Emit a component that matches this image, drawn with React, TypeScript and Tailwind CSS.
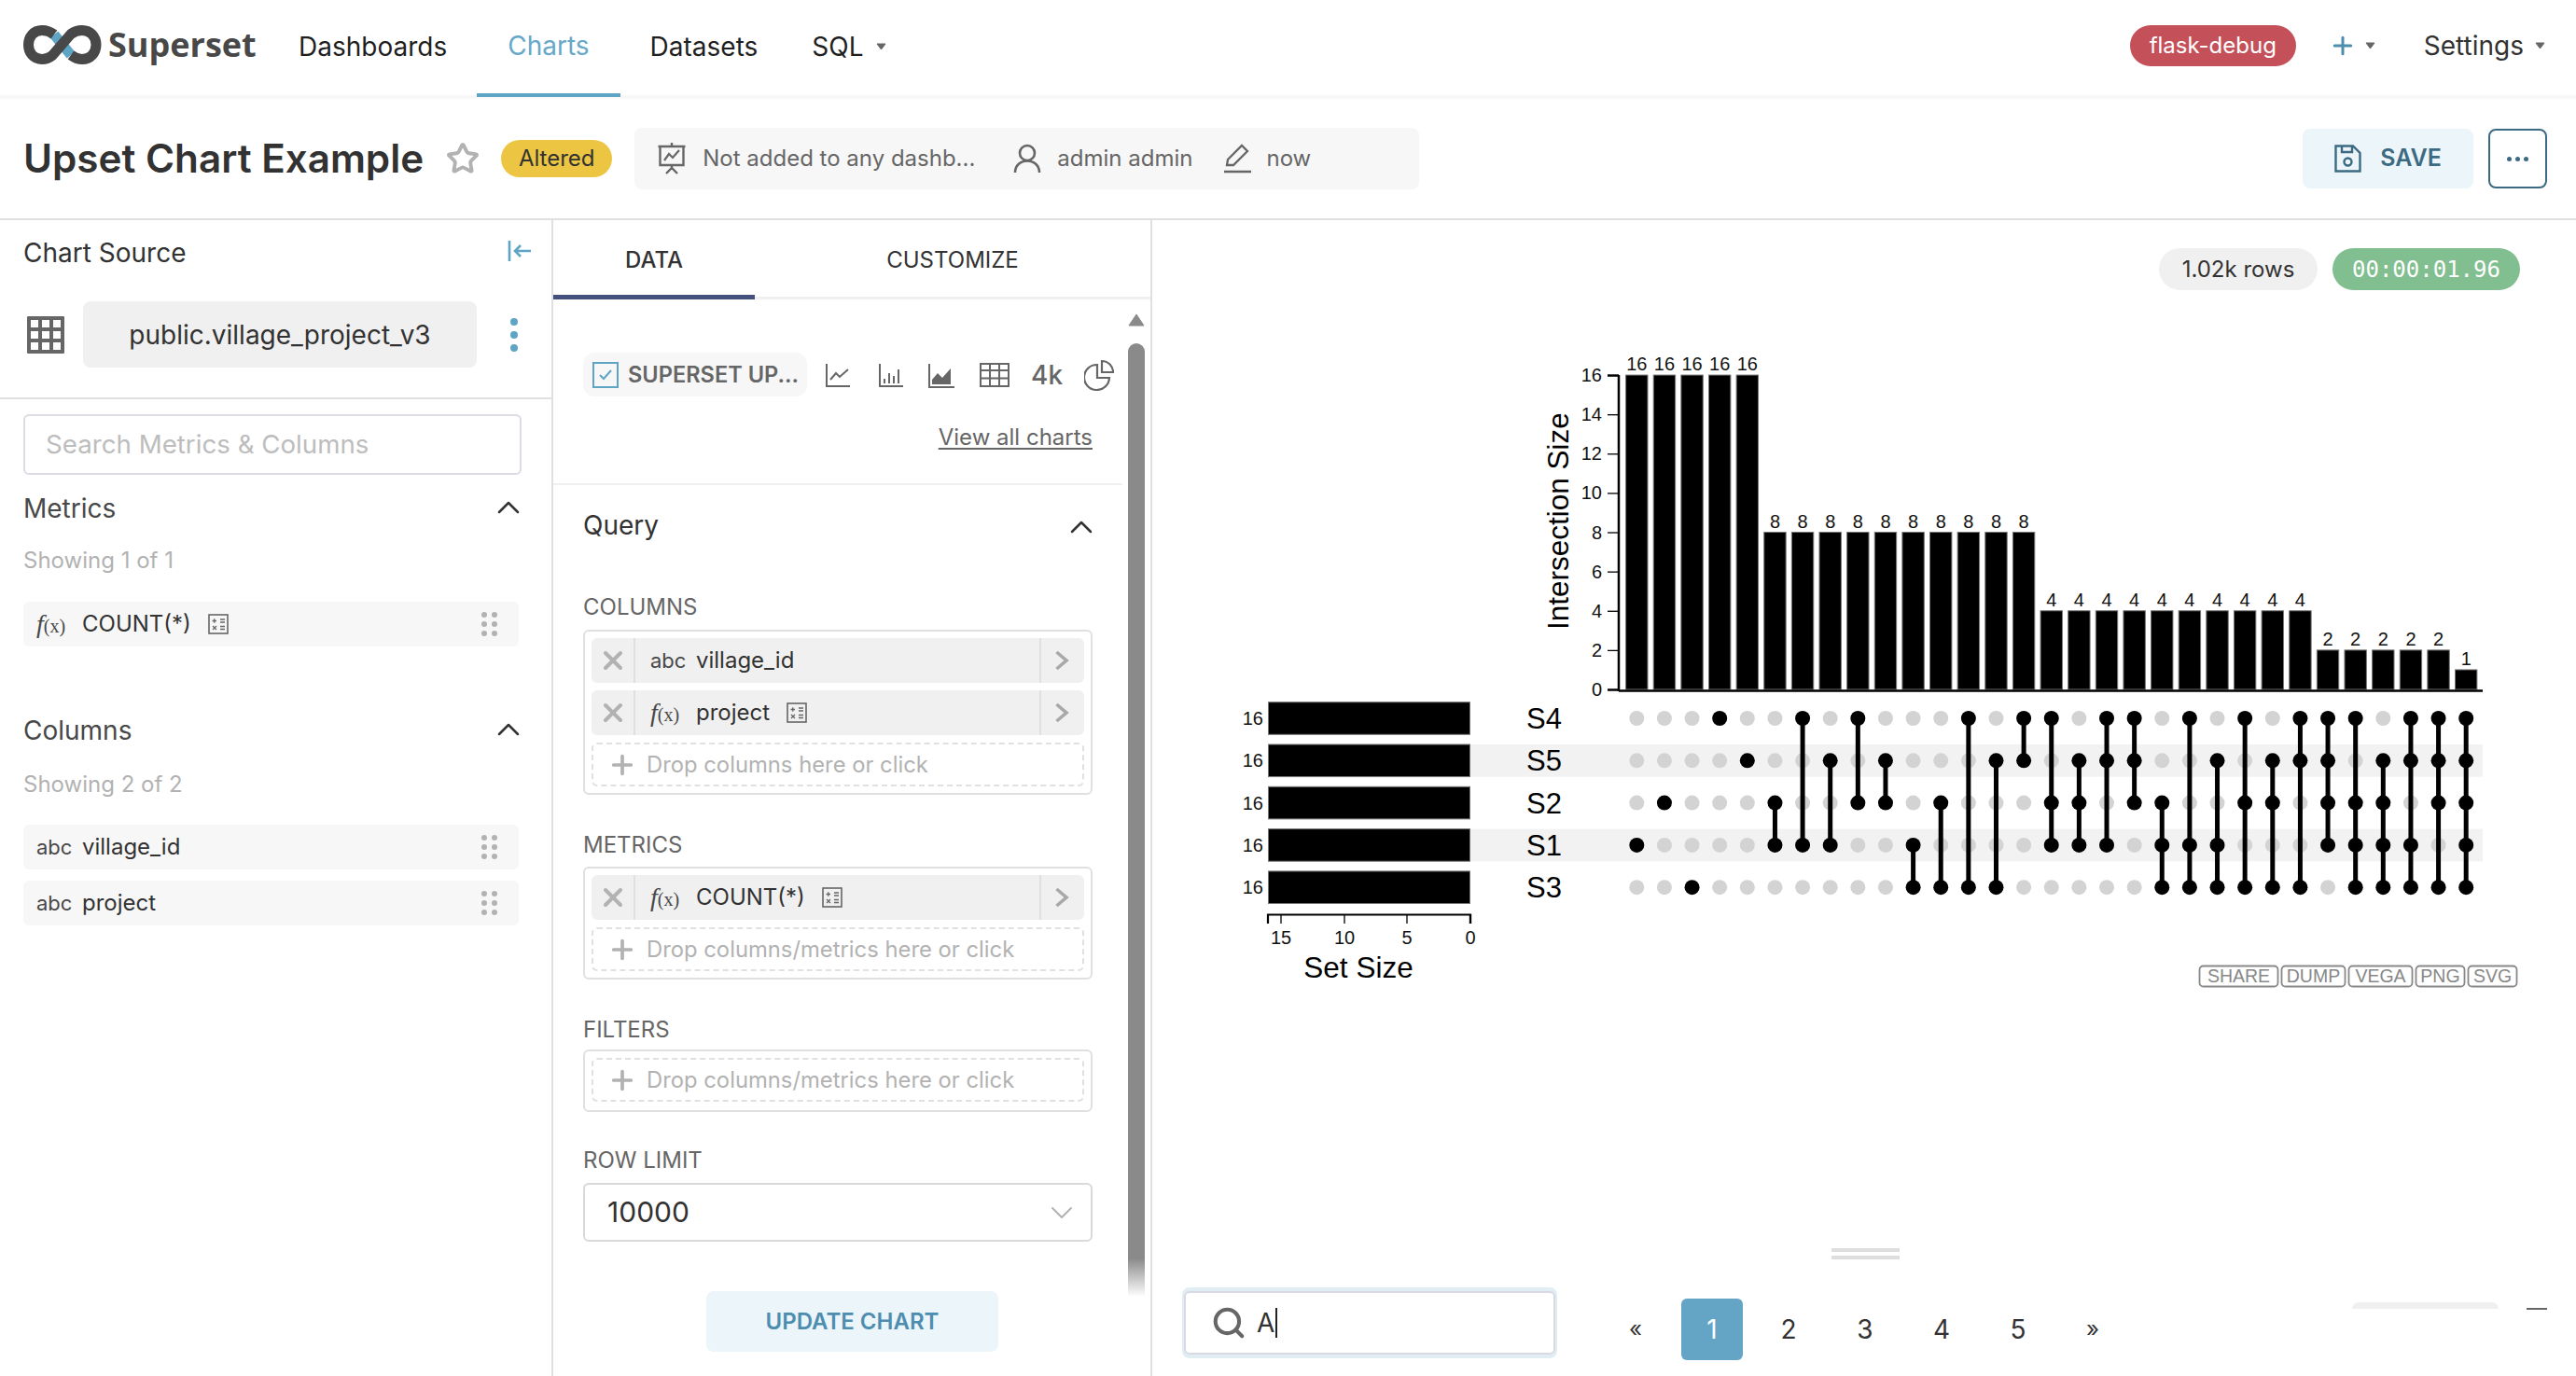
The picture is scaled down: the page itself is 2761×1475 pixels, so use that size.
import React from 'react';
import { ChevronUp, ChevronDown, X, Plus, Star, Search } from 'lucide-react';

const sans = "font-['Inter',sans-serif]";

// rows top to bottom: S4, S5, S2, S1, S3
const sets = ['S4', 'S5', 'S2', 'S1', 'S3'];
const combos = [
  [3], [2], [4], [0], [1],
  [2, 3], [0, 3], [1, 3], [0, 2], [1, 2], [3, 4], [2, 4], [0, 4], [1, 4], [0, 1],
  [0, 2, 3], [1, 2, 3], [0, 1, 3], [0, 1, 2], [2, 3, 4], [0, 3, 4], [1, 3, 4], [0, 2, 4], [1, 2, 4], [0, 1, 4],
  [0, 1, 2, 3], [0, 2, 3, 4], [1, 2, 3, 4], [0, 1, 3, 4], [0, 1, 2, 4], [0, 1, 2, 3, 4],
];
const sizes = [16, 16, 16, 16, 16, 8, 8, 8, 8, 8, 8, 8, 8, 8, 8, 4, 4, 4, 4, 4, 4, 4, 4, 4, 4, 2, 2, 2, 2, 2, 1];

const colX = (i: number) => 1754.3 + i * 29.63;
const rowY = (i: number) => 770 + i * 45.3;

function Caret({ className }: { className?: string }) {
  return (
    <svg width="11" height="8" viewBox="0 0 11 8" className={className}>
      <path d="M1 1 H10 L5.5 7 Z" fill="#666" stroke="#666" strokeLinejoin="round" />
    </svg>
  );
}

function Logo() {
  return (
    <svg width="84" height="42" viewBox="0 0 84 42" fill="none" strokeWidth="11">
      <path d="M33 10 L51 32" stroke="#5ea4c5" />
      <path d="M33 10 C29 7 25 5.5 20 5.5 C11 5.5 5.5 12.5 5.5 21 C5.5 29.5 11 36.5 20 36.5 C25 36.5 28 35 31 32.5 L51 9.5 C55 6.5 58 5.5 63 5.5 C72 5.5 78 12.5 78 21 C78 29.5 72 36.5 63 36.5 C58 36.5 55 35 51 32" stroke="#484848" />
    </svg>
  );
}

function FxIcon() {
  return (
    <span className="inline-flex items-baseline w-[37px] text-[#484848] font-['Liberation_Serif',serif]">
      <span className="italic text-[28px] leading-none">f</span>
      <span className="text-[20px] leading-none">(x)</span>
    </span>
  );
}

function CalcIcon() {
  return (
    <svg width="22" height="22" viewBox="0 0 22 22" fill="none" stroke="#666" strokeWidth="1.6">
      <rect x="1" y="1" width="20" height="20" />
      <path d="M4.5 7.5 H9 M6.75 5.2 V9.8 M13 6 H18 M13 9 H18 M5 13 L9 17 M9 13 L5 17 M13 13.5 H18 M13 16.5 H18" strokeWidth="1.3" />
    </svg>
  );
}

function Grip() {
  return (
    <div className="grid grid-cols-2 gap-x-[5px] gap-y-[4px]">
      {[0, 1, 2, 3, 4, 5].map((i) => (
        <span key={i} className="w-[6px] h-[6px] rounded-full bg-[#b2b2b2]" />
      ))}
    </div>
  );
}

function ListRow({ icon, label, calc }: { icon: React.ReactNode; label: string; calc?: boolean }) {
  return (
    <div className="h-[48px] w-[531px] ml-[25px] bg-[#f7f7f7] rounded-[6px] flex items-center pl-[14px] pr-[23px] text-[24px] text-[#323232]">
      {icon}
      <span className="ml-[12px]">{label}</span>
      {calc && <span className="ml-[18px] flex"><CalcIcon /></span>}
      <span className="ml-auto"><Grip /></span>
    </div>
  );
}

function Abc() {
  return <span className="w-[37px] text-[22px] text-[#484848]">abc</span>;
}

function Chip({ icon, label, calc }: { icon: React.ReactNode; label: string; calc?: boolean }) {
  return (
    <div className="h-[48px] bg-[#f0f0f0] rounded-[6px] flex items-center text-[#323232]">
      <div className="w-[47px] h-full flex items-center justify-center border-r-2 border-[#e0e0e0]">
        <X size={32} strokeWidth={3} className="text-[#b2b2b2]" />
      </div>
      <div className="flex-1 flex items-center pl-[16px] text-[24px]">
        {icon}
        <span className="ml-[12px]">{label}</span>
        {calc && <span className="ml-[18px] flex"><CalcIcon /></span>}
      </div>
      <div className="w-[48px] h-full flex items-center justify-center border-l-2 border-[#e0e0e0]">
        <svg width="16" height="24" viewBox="0 0 16 24" fill="none" stroke="#a8a8a8" strokeWidth="3.6" className="-ml-[3px]">
          <path d="M2.5 3 L13 12 L2.5 21" />
        </svg>
      </div>
    </div>
  );
}

function DropZone({ text }: { text: string }) {
  return (
    <div className="h-[47px] border-2 border-dashed border-[#e0e0e0] rounded-[6px] flex items-center pl-[15px] text-[23.8px] text-[#b2b2b2]">
      <Plus size={32} strokeWidth={2.8} className="mr-[10px] text-[#b2b2b2]" />
      {text}
    </div>
  );
}

function ControlBox({ children, className }: { children: React.ReactNode; className: string }) {
  return (
    <div className={`${className} w-[546px] border-2 border-[#e0e0e0] rounded-[6px] p-[7px] flex flex-col gap-[8px]`}>
      {children}
    </div>
  );
}

function UpsetChart() {
  return (
    <svg width="1400" height="720" viewBox="1300 370 1400 720" className="block font-['Liberation_Sans',sans-serif]">
      {/* intersection bars */}
      {sizes.map((s, i) => (
        <g key={i}>
          <rect x={colX(i) - 11.7} y={739 - s * 21.06} width={23.4} height={s * 21.06} fill="#000" stroke="#777" strokeWidth="1" />
          <text x={colX(i)} y={739 - s * 21.06 - 5} textAnchor="middle" fontSize="20" fill="#111">{s}</text>
        </g>
      ))}
      <path d="M1735 402 V741 M1735 740.5 H2661" stroke="#000" strokeWidth="2.5" fill="none" />
      {[0, 2, 4, 6, 8, 10, 12, 14, 16].map((t) => (
        <g key={t}>
          <line x1="1723" x2="1735" y1={739.5 - t * 21.06} y2={739.5 - t * 21.06} stroke="#000" strokeWidth={t === 0 || t === 16 ? 2.5 : 1.3} />
          <text x="1717" y={746 - t * 21.06} textAnchor="end" fontSize="20" fill="#111">{t}</text>
        </g>
      ))}
      <text transform="translate(1681 675) rotate(-90)" fontSize="31.5" fill="#000">Intersection Size</text>

      {/* stripes */}
      {[1, 3].map((r) => (
        <rect key={r} x="1576" y={rowY(r) - 17.3} width="1085" height="34.7" fill="#f2f2f2" />
      ))}

      {/* set bars */}
      {sets.map((s, r) => (
        <g key={s}>
          <rect x="1359.5" y={rowY(r) - 17.3} width="216" height="34.6" fill="#000" stroke="#777" strokeWidth="1" />
          <text x="1354" y={rowY(r) + 7} textAnchor="end" fontSize="20" fill="#111">16</text>
          <text x="1636" y={rowY(r) + 11} fontSize="31" fill="#000">{s}</text>
        </g>
      ))}
      <path d="M1359 990 V980.5 H1576 V990" stroke="#000" strokeWidth="2.2" fill="none" />
      {[[15, 1373], [10, 1441], [5, 1508], [0, 1576]].map(([t, x]) => (
        <g key={t}>
          <line x1={x} x2={x} y1="980" y2="990" stroke="#000" strokeWidth={t === 0 ? 2.2 : 1.3} />
          <text x={x} y="1012" textAnchor="middle" fontSize="20" fill="#111">{t}</text>
        </g>
      ))}
      <text x="1456" y="1048" textAnchor="middle" fontSize="31.5" fill="#000">Set Size</text>

      {/* matrix */}
      {combos.map((c, i) => (
        <g key={i}>
          {sets.map((_, r) => (
            <circle key={r} cx={colX(i)} cy={rowY(r)} r="8" fill={c.includes(r) ? '#000' : '#d3d3d3'} />
          ))}
          <line x1={colX(i)} x2={colX(i)} y1={rowY(c[0])} y2={rowY(c[c.length - 1])} stroke="#000" strokeWidth="5" />
        </g>
      ))}

      {/* export buttons */}
      {[['SHARE', 2357, 84], ['DUMP', 2445, 68], ['VEGA', 2517, 68], ['PNG', 2589, 52], ['SVG', 2645, 52]].map(([t, x, w]) => (
        <g key={t as string}>
          <rect x={(x as number) + 0.5} y="1035.5" width={w as number} height="22" rx="4" fill="#fff" stroke="#888" strokeWidth="1.8" />
          <text x={(x as number) + 0.5 + (w as number) / 2} y="1053" textAnchor="middle" fontSize="19.5" fill="#888">{t as string}</text>
        </g>
      ))}
    </svg>
  );
}

export default function App() {
  return (
    <div className={`${sans} w-[2761px] h-[1475px] overflow-hidden bg-white flex flex-col text-[#323232]`}>
      {/* top nav */}
      <nav className="h-[106px] shrink-0 border-b-4 border-[#f7f7f7] flex items-stretch pl-[25px] pr-[33px] text-[28px]">
        <div className="flex items-center mb-[6px]">
          <Logo />
          <span className="w-[160px] ml-[7px] text-[36px] font-bold text-[#484848] font-['Open_Sans',sans-serif]">Superset</span>
        </div>
        <span className="ml-[44px] pb-[2px] flex items-center text-[#1f1f1f]">Dashboards</span>
        <span className="ml-[32px] px-[33px] -mb-[2px] pb-[2px] flex items-center text-[#66a8c9] border-b-4 border-[#5ea4c5]">Charts</span>
        <span className="ml-[32px] pb-[2px] flex items-center text-[#1f1f1f]">Datasets</span>
        <span className="ml-[58px] pb-[2px] flex items-center text-[#1f1f1f]">SQL<Caret className="ml-[13px]" /></span>
        <div className="ml-auto pb-[4px] flex items-center">
          <span className="h-[44px] w-[178px] rounded-[22px] bg-[#c4505a] text-white text-[24px] flex items-center justify-center">flask-debug</span>
          <Plus size={30} strokeWidth={2.4} className="ml-[35px] text-[#4d8db0]" />
          <Caret className="ml-[9px]" />
          <span className="ml-[52px]">Settings</span>
          <Caret className="ml-[12px]" />
        </div>
      </nav>

      {/* title bar */}
      <header className="h-[130px] shrink-0 border-b-2 border-[#e0e0e0] flex items-center pl-[25px] pr-[31px]">
        <h1 className="text-[42.2px] font-semibold text-[#323232]">Upset Chart Example</h1>
        <Star size={36} strokeWidth={2.6} className="ml-[24px] text-[#b2b2b2]" />
        <span className="ml-[23px] h-[40px] w-[119px] rounded-[20px] bg-[#ecc643] text-[24px] text-[#323232] flex items-center justify-center">Altered</span>
        <div className="ml-[24px] h-[66px] w-[841px] bg-[#f7f7f7] rounded-[8px] flex items-center pl-[24px] text-[24px] text-[#666]">
          <svg width="32" height="36" viewBox="0 0 32 36" fill="none" stroke="#666" strokeWidth="2.4">
            <path d="M1.5 5 H30.5 M3.5 5 V25 H28.5 V5 M16 1 V5 M16 25 V28 M10 34 L16 28 L22 34" />
            <path d="M8 20 L13 13 L17 17 L24 9" strokeWidth="2.2" />
          </svg>
          <span className="ml-[17px]">Not added to any dashb...</span>
          <svg width="30" height="32" viewBox="0 0 30 32" fill="none" stroke="#666" strokeWidth="2.6" className="ml-[41px]">
            <circle cx="15" cy="10" r="8" />
            <path d="M2 31 C2 23 8 18.5 15 18.5 C22 18.5 28 23 28 31" />
          </svg>
          <span className="ml-[17px]">admin admin</span>
          <svg width="32" height="34" viewBox="0 0 32 34" fill="none" stroke="#666" strokeWidth="2.3" className="ml-[33px]">
            <path d="M4 24 L5 18 L20 3 L26 9 L11 24 Z M1 31 H30" />
          </svg>
          <span className="ml-[14px]">now</span>
        </div>
        <button className="ml-auto h-[64px] w-[183px] bg-[#ecf5f9] rounded-[8px] flex items-center justify-center text-[25px] font-semibold text-[#3c6a83]">
          <svg width="29" height="30" viewBox="0 0 29 30" fill="none" stroke="#3c6a83" strokeWidth="2.4" className="mr-[20px]">
            <path d="M1.5 1.5 H20 L27.5 9 V28.5 H1.5 Z M8 1.5 V8 H19 V1.5" />
            <circle cx="14.5" cy="18.5" r="4" />
          </svg>
          SAVE
        </button>
        <button className="ml-[16px] h-[64px] w-[63px] border-2 border-[#3c6a83] rounded-[8px] flex items-center justify-center gap-[4px]">
          <span className="w-[5px] h-[5px] rounded-full bg-[#3c6a83]" />
          <span className="w-[5px] h-[5px] rounded-full bg-[#3c6a83]" />
          <span className="w-[5px] h-[5px] rounded-full bg-[#3c6a83]" />
        </button>
      </header>

      <div className="flex-1 flex min-h-0">
        {/* chart source */}
        <aside className="w-[593px] shrink-0 border-r-2 border-[#e0e0e0] flex flex-col">
          <div className="h-[192px] shrink-0 border-b-2 border-[#e0e0e0]">
            <div className="h-[70px] pl-[25px] pr-[21px] flex items-center justify-between text-[28px]">
              Chart Source
              <svg width="26" height="24" viewBox="0 0 26 24" fill="none" stroke="#5ea4c5" strokeWidth="2.6" className="-mt-[4px]">
                <path d="M2 1 V23 M25 12 H8 M14 6 L8 12 L14 18" />
              </svg>
            </div>
            <div className="mt-[17px] flex items-center">
              <svg width="40" height="40" viewBox="0 0 40 40" className="ml-[29px]">
                <path fillRule="evenodd" fill="#666" d="M0 1 a1 1 0 0 1 1 -1 H39 a1 1 0 0 1 1 1 V39 a1 1 0 0 1 -1 1 H1 a1 1 0 0 1 -1 -1 Z M4 4 V12 H12 V4 Z M16 4 V12 H24 V4 Z M28 4 V12 H36 V4 Z M4 16 V24 H12 V16 Z M16 16 V24 H24 V16 Z M28 16 V24 H36 V16 Z M4 28 V36 H12 V28 Z M16 28 V36 H24 V28 Z M28 28 V36 H36 V28 Z" />
              </svg>
              <div className="ml-[20px] w-[422px] h-[71px] rounded-[8px] bg-[#f0f0f0] flex items-center justify-center text-[28px] text-[#323232]">public.village_project_v3</div>
              <div className="ml-[36px] flex flex-col gap-[6px]">
                <span className="w-[8px] h-[8px] rounded-full bg-[#5ea4c5]" />
                <span className="w-[8px] h-[8px] rounded-full bg-[#5ea4c5]" />
                <span className="w-[8px] h-[8px] rounded-full bg-[#5ea4c5]" />
              </div>
            </div>
          </div>
          <div className="mt-[16px] mx-[25px] w-[534px] h-[65px] border-2 border-[#dcdce4] rounded-[6px] flex items-center pl-[22px] text-[27.7px] text-[#bdbdbd]">Search Metrics &amp; Columns</div>
          <div className="mt-[16px] pl-[25px] pr-[26px] h-[40px] flex items-center justify-between text-[28px] text-[#484848]">
            Metrics
            <ChevronUp size={40} strokeWidth={1.5} className="-mt-[2px] text-[#323232]" />
          </div>
          <div className="mt-[20px] pl-[25px] h-[32px] flex items-center text-[24px] text-[#b2b2b2]">Showing 1 of 1</div>
          <div className="mt-[28px]"><ListRow icon={<FxIcon />} label="COUNT(*)" calc /></div>
          <div className="mt-[70px] pl-[25px] pr-[26px] h-[40px] flex items-center justify-between text-[28px] text-[#484848]">
            Columns
            <ChevronUp size={40} strokeWidth={1.5} className="-mt-[2px] text-[#323232]" />
          </div>
          <div className="mt-[22px] pl-[25px] h-[32px] flex items-center text-[24px] text-[#b2b2b2]">Showing 2 of 2</div>
          <div className="mt-[27px] flex flex-col gap-[12px]">
            <ListRow icon={<Abc />} label="village_id" />
            <ListRow icon={<Abc />} label="project" />
          </div>
        </aside>

        {/* controls */}
        <section className="w-[642px] shrink-0 border-r-2 border-[#e0e0e0] flex flex-col">
          <div className="h-[85px] shrink-0 flex border-b-[3px] border-[#f0f0f0] text-[24px]">
            <div className="w-[216px] -mb-[3px] pt-[6px] flex items-center justify-center border-b-[5px] border-[#44507e] text-[#323232] font-medium">DATA</div>
            <div className="w-[424px] pt-[4px] flex items-center justify-center text-[#323232]">CUSTOMIZE</div>
          </div>
          <div className="flex-1 flex min-h-0">
            <div className="w-[610px] shrink-0 flex flex-col">
              <div className="h-[199px] shrink-0 border-b-2 border-[#f0f0f0] pl-[32px] pr-[32px]">
                <div className="mt-[57px] flex items-center">
                  <div className="w-[240px] h-[47px] shrink-0 rounded-[12px] bg-[#f7f7f7] flex items-center pl-[10px] text-[23.6px] font-semibold text-[#666]">
                    <span className="w-[28px] h-[28px] shrink-0 border-2 border-[#5ea4c5] flex items-center justify-center">
                      <svg width="16" height="14" viewBox="0 0 16 14" fill="none" stroke="#5ea4c5" strokeWidth="2"><path d="M2 7 L6 11 L14 2" /></svg>
                    </span>
                    <span className="ml-[10px] whitespace-nowrap">SUPERSET UP...</span>
                  </div>
                  <svg width="28" height="28" viewBox="0 0 28 28" fill="none" stroke="#666" strokeWidth="2" className="ml-[19px] shrink-0">
                    <path d="M2 2 V26 H27 M6 19 L12 12 L16 16 L25 8" />
                  </svg>
                  <svg width="28" height="28" viewBox="0 0 28 28" fill="none" stroke="#666" strokeWidth="2" className="ml-[29px] shrink-0">
                    <path d="M2 2 V26 H27 M7 23 V18 M12 23 V12 M17 23 V15 M22 23 V8" />
                  </svg>
                  <svg width="28" height="28" viewBox="0 0 28 28" className="ml-[26px] shrink-0">
                    <path d="M1 2 V27 H28" fill="none" stroke="#666" strokeWidth="2" />
                    <path d="M4 24 V19 L10 12 L15 17 L24 7 V24 Z" fill="#666" />
                  </svg>
                  <svg width="32" height="26" viewBox="0 0 32 26" fill="none" stroke="#666" strokeWidth="2" className="ml-[27px] shrink-0">
                    <path d="M1 1 H31 V25 H1 Z M1 8 H31 M1 16.5 H31 M11 1 V25 M21 1 V25" />
                  </svg>
                  <span className="ml-[23px] text-[28px] font-medium text-[#666]">4k</span>
                  <svg width="32" height="34" viewBox="0 0 32 34" fill="none" stroke="#666" strokeWidth="2.2" className="ml-[23px] shrink-0">
                    <path d="M14 6 A13.5 13.5 0 1 0 27 20 H14 Z M19 2 A12 12 0 0 1 31 14 H19 Z" />
                  </svg>
                </div>
                <div className="mt-[26px] text-right text-[24px] text-[#666] underline underline-offset-[3px]">View all charts</div>
              </div>
              <div className="pl-[32px]">
                <div className="h-[84px] w-[546px] flex items-center justify-between text-[28px] text-[#323232] pt-[1px]">
                  Query
                  <ChevronUp size={40} strokeWidth={1.5} className="-mr-[8px] mt-[4px] text-[#323232]" />
                </div>
                <div className="mt-[34px] h-[26px] flex items-center text-[24px] text-[#666]">COLUMNS</div>
                <ControlBox className="mt-[11px]">
                  <Chip icon={<Abc />} label="village_id" />
                  <Chip icon={<FxIcon />} label="project" calc />
                  <DropZone text="Drop columns here or click" />
                </ControlBox>
                <div className="mt-[41px] h-[26px] flex items-center text-[24px] text-[#666]">METRICS</div>
                <ControlBox className="mt-[10px]">
                  <Chip icon={<FxIcon />} label="COUNT(*)" calc />
                  <DropZone text="Drop columns/metrics here or click" />
                </ControlBox>
                <div className="mt-[41px] h-[26px] flex items-center text-[24px] text-[#666]">FILTERS</div>
                <ControlBox className="mt-[8px] pb-[9px]">
                  <DropZone text="Drop columns/metrics here or click" />
                </ControlBox>
                <div className="mt-[39px] h-[26px] flex items-center text-[24px] text-[#666]">ROW LIMIT</div>
                <div className="mt-[11px] w-[546px] h-[63px] border-2 border-[#d9d9d9] rounded-[6px] flex items-center pl-[24px] pr-[8px] justify-between text-[30px] text-[#323232]">
                  10000
                  <ChevronDown size={40} strokeWidth={1.2} className="-ml-[3px] mr-[3px] text-[#b2b2b2]" />
                </div>
                <button className="mt-[53px] ml-[132px] w-[313px] h-[65px] rounded-[8px] bg-[#ecf5f9] text-[24px] font-semibold text-[#4d8db0]">UPDATE CHART</button>
              </div>
            </div>
            {/* scrollbar */}
            <div className="w-[18px] ml-[6px] flex flex-col items-center pt-[15px]">
              <svg width="18" height="14" viewBox="0 0 18 14"><path d="M9 1 L17 13 H1 Z" fill="#8a8a8a" stroke="#8a8a8a" strokeLinejoin="round" /></svg>
              <div className="mt-[18px] w-[18px] h-[1022px] rounded-t-[9px] bg-gradient-to-b from-[#8a8a8a] from-[96%] to-transparent" />
            </div>
          </div>
        </section>

        {/* chart */}
        <main className="flex-1 flex flex-col min-w-0">
          <div className="pt-[30px] pr-[60px] flex justify-end gap-[16px]">
            <span className="w-[170px] h-[45px] rounded-[23px] bg-[#f0f0f0] flex items-center justify-center text-[24px] text-[#323232]">1.02k rows</span>
            <span className="w-[201px] h-[45px] rounded-[23px] bg-[#81be90] flex items-center justify-center text-[24px] text-white font-['DejaVu_Sans_Mono',monospace]">00:00:01.96</span>
          </div>
          <div className="mt-[59px] ml-[65px]"><UpsetChart /></div>
          <div className="ml-[728px] mt-[248px] w-[73px] h-[12px] border-y-4 border-[#dedede]" />
          <div className="mt-[30px] flex items-start">
            <div className="ml-[32px] w-[402px] h-[76px] rounded-[8px] bg-[#e0eef4] py-[4px] px-[2px]">
              <div className="h-[68px] bg-white border-2 border-[#d9d9e3] rounded-[6px] flex items-center pl-[27px] text-[28px] text-[#323232]">
                <Search size={38} strokeWidth={2.6} className="text-[#666]" />
                <span className="ml-[11px] border-r-2 border-[#222] leading-[32px] pr-[1px]">A</span>
              </div>
            </div>
            <div className="ml-[72px] mt-[12px] flex items-center text-[28px] text-[#323232]">
              <span className="w-[24px] text-center text-[24px]">«</span>
              <span className="ml-[37px] w-[66px] h-[66px] rounded-[6px] bg-[#64a5c6] text-white flex items-center justify-center">1</span>
              <span className="ml-[16px] w-[66px] text-center">2</span>
              <span className="ml-[16px] w-[66px] text-center">3</span>
              <span className="ml-[16px] w-[66px] text-center">4</span>
              <span className="ml-[16px] w-[66px] text-center">5</span>
              <span className="ml-[14px] w-[66px] text-center text-[24px]">»</span>
            </div>
            <div className="ml-[245px] mt-[16px] w-[157px] h-[7px] rounded-t-[10px] bg-[#f0f0f0]" />
            <div className="ml-[30px] mt-[22px] w-[22px] h-[2px] bg-[#666]" />
          </div>
        </main>
      </div>
    </div>
  );
}
